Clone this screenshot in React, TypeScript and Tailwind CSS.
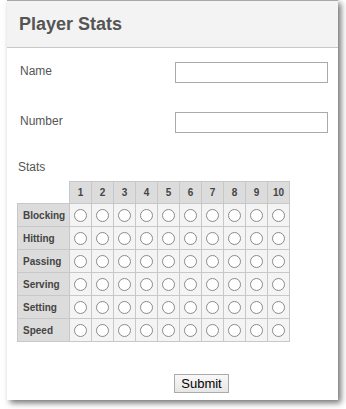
import React from "react";

const stats = ["Blocking", "Hitting", "Passing", "Serving", "Setting", "Speed"];
const nums = [1, 2, 3, 4, 5, 6, 7, 8, 9, 10];

export default function App() {
  return (
    <div className="w-[346px] h-[409px] bg-white pl-[7px]" style={{ fontFamily: '"Liberation Sans", Arial, sans-serif' }}>
      <div className="w-[331px] h-[400px] bg-white border-t border-[#a8a8a8] shadow-[3px_3px_6px_rgba(0,0,0,0.55)] flex flex-col">
        <div className="h-[47px] bg-[#f3f3f3] border-b border-[#c8c8c8] flex items-center pl-[12px]">
          <h1 className="text-[18px] font-bold text-[#555] leading-none">Player Stats</h1>
        </div>
        <div className="flex items-center mt-[14px]">
          <label className="w-[168px] shrink-0 pl-[13px] text-[12px] text-[#555] leading-[14px] -mt-[3px]">Name</label>
          <input type="text" className="w-[153px] h-[21px] border border-[#aaa] bg-white outline-none" />
        </div>
        <div className="flex items-center mt-[29px]">
          <label className="w-[168px] shrink-0 pl-[13px] text-[12px] text-[#555] leading-[14px] -mt-[3px]">Number</label>
          <input type="text" className="w-[153px] h-[21px] border border-[#aaa] bg-white outline-none" />
        </div>
        <div className="mt-[27px] pl-[11px] text-[12px] text-[#555] leading-[14px]">Stats</div>
        <div className="mt-[7px] pl-[10px]">
          <table className="border-collapse table-fixed text-[10px] font-bold text-[#444]">
            <thead>
              <tr className="h-[22px]">
                <th className="w-[52px] p-0 bg-white"></th>
                {nums.map((n) => (
                  <th key={n} className="w-[22px] p-0 border border-[#c8c8c8] bg-[#dcdcdc] text-center font-bold">
                    {n}
                  </th>
                ))}
              </tr>
            </thead>
            <tbody>
              {stats.map((s) => (
                <tr key={s} className="h-[23px]">
                  <td className="p-0 pl-[5px] border border-[#c8c8c8] bg-[#dcdcdc] text-left">{s}</td>
                  {nums.map((n) => (
                    <td key={n} className="p-0 border border-[#c8c8c8] bg-[#f4f4f4] text-center">
                      <span className="inline-block w-[13px] h-[13px] rounded-full border border-[#8a8a8a] bg-white align-middle" />
                    </td>
                  ))}
                </tr>
              ))}
            </tbody>
          </table>
        </div>
        <div className="mt-[29px] pl-[167px]">
          <button className="w-[55px] h-[19px] border border-[#aaa] bg-gradient-to-b from-[#f8f8f8] to-[#e6e6e6] text-[13px] text-black leading-none">
            Submit
          </button>
        </div>
      </div>
    </div>
  );
}
